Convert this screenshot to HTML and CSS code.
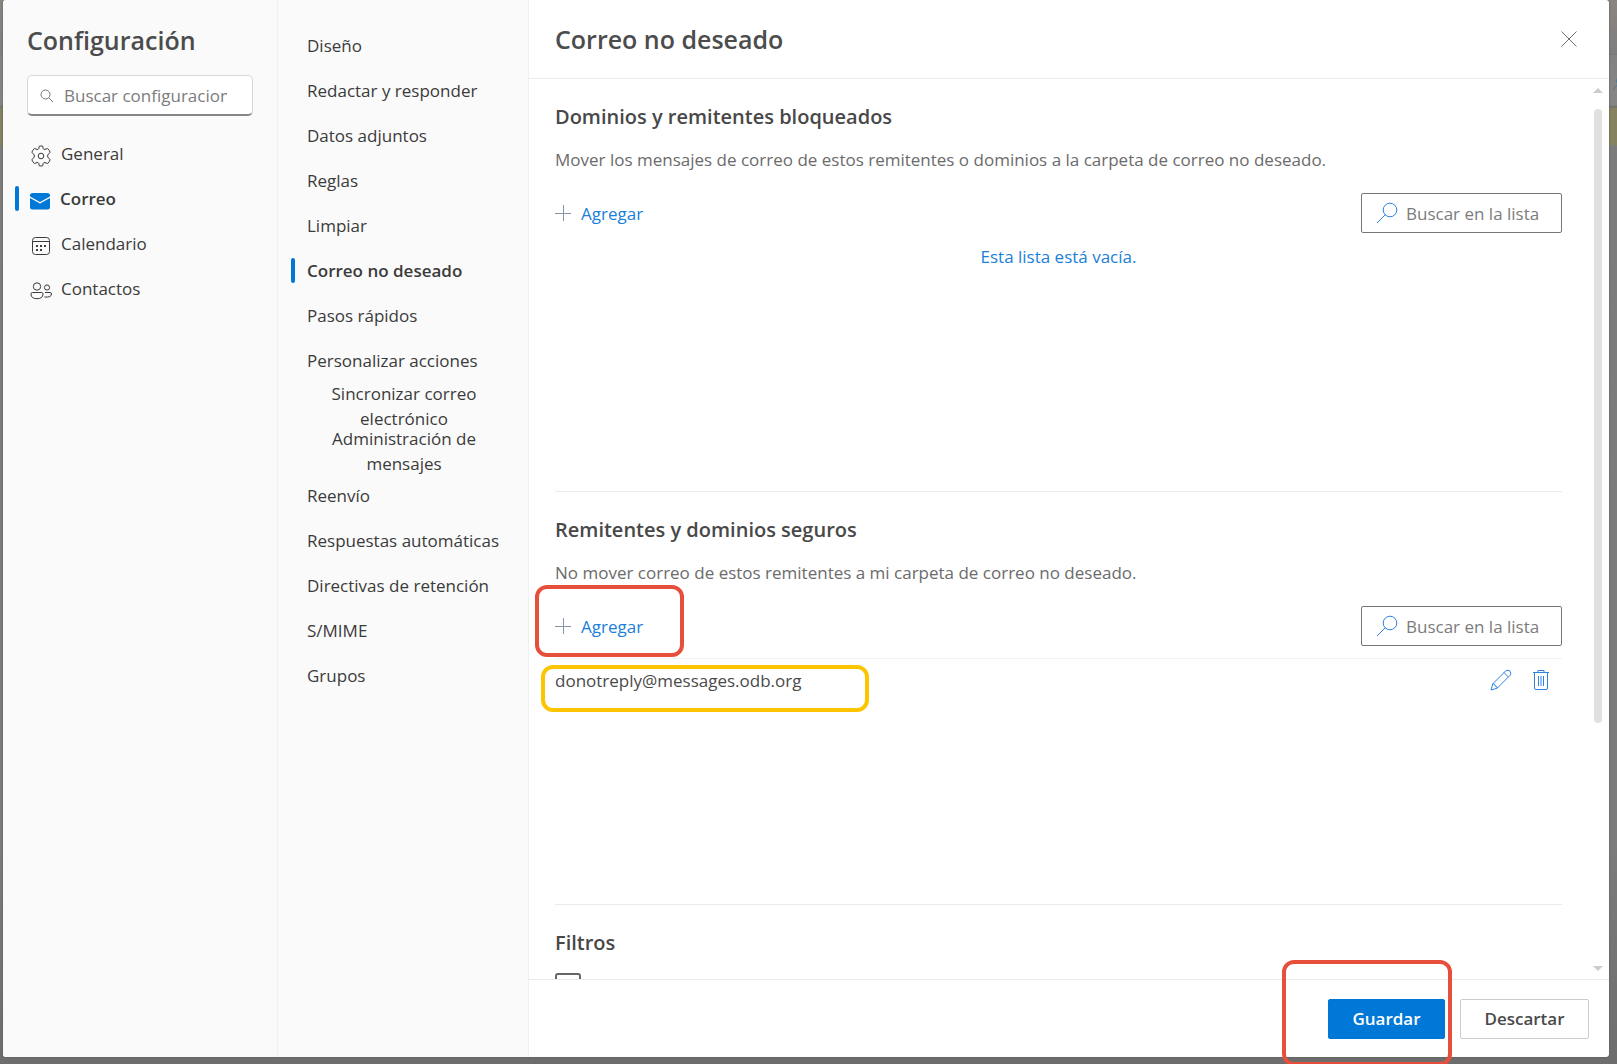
FILE: index.html
```html
<!DOCTYPE html>
<html lang="es">
<head>
<meta charset="utf-8">
<meta name="viewport" content="width=device-width, initial-scale=1">
<title>Configuración - Correo no deseado</title>
<link rel="stylesheet" href="styles.css">
</head>
<body>
<div class="backdrop">
  <svg class="backdrop-icon" viewBox="0 0 16 16" aria-hidden="true"><circle cx="8" cy="4" r="3.5"/><path d="M6 7L1 13"/></svg>
  <div class="dialog" role="dialog" aria-label="Configuración">
    <aside class="categories">
      <h1 class="title">Configuración</h1>
      <label class="settings-search">
        <svg class="icon-small" viewBox="0 0 14 14" aria-hidden="true"><circle cx="5.5" cy="5.5" r="4.5"/><path d="M8.8 8.8L13 13"/></svg>
        <input type="text" placeholder="Buscar configuraciones" aria-label="Buscar configuraciones">
      </label>
      <nav class="nav">
        <a class="nav-item" href="#general">
          <svg class="icon" viewBox="0 0 22 22" aria-hidden="true"><circle cx="11" cy="11" r="2.8"/><path d="M9.3 1.2Q11 .7 12.7 1.2L13.2 3.6Q13.6 4.8 15 4.4L17.6 3.5Q19.3 5 20.2 7.4L18.2 9.2Q16.9 11 18.2 12.8L20.2 14.6Q19.3 17 17.6 18.5L15 17.6Q13.6 17.2 13.2 18.4L12.7 20.8Q11 21.3 9.3 20.8L8.8 18.4Q8.4 17.2 7 17.6L4.4 18.5Q2.700 17 1.800 14.6L3.800 12.8Q5.100 11 3.800 9.200L1.800 7.400Q2.700 5 4.400 3.500L7 4.400Q8.400 4.800 8.800 3.600Z"/></svg>
          <span>General</span>
        </a>
        <a class="nav-item selected" href="#correo" aria-current="true">
          <svg class="icon" viewBox="0 0 22 22" aria-hidden="true"><path class="solid" d="M1 5.500Q1 3 3.500 3H18.500Q21 3 21 5.500V6.500L11 12L1 6.500ZM1 8L11 13.500L21 8V17Q21 19.500 18.500 19.500H3.500Q1 19.500 1 17Z"/></svg>
          <span>Correo</span>
        </a>
        <a class="nav-item" href="#calendario">
          <svg class="icon" viewBox="0 0 22 22" aria-hidden="true"><rect x="2.500" y="2.500" width="17" height="17" rx="3"/><path d="M2.500 6.500H19.500"/><path class="solid" d="M10 10h2v2h-2zM14 10h2v2h-2zM6 10h2v2H6zM6 14h2v2H6zM10 14h2v2h-2z"/></svg>
          <span>Calendario</span>
        </a>
        <a class="nav-item" href="#contactos">
          <svg class="icon" viewBox="0 0 22 22" aria-hidden="true"><circle cx="7" cy="6.500" r="3.700"/><circle cx="17" cy="7.500" r="2.600"/><path d="M2.500 12.500H11.500Q13 12.500 13 14Q13 18.700 7 18.700Q1 18.700 1 14Q1 12.500 2.500 12.500ZM15 12.500H20Q21.500 12.500 21.500 14Q21.500 17.600 14.500 17"/></svg>
          <span>Contactos</span>
        </a>
      </nav>
    </aside>

    <nav class="pages" aria-label="Correo">
      <a class="page" href="#diseno"><span>Diseño</span></a>
      <a class="page" href="#redactar"><span>Redactar y responder</span></a>
      <a class="page" href="#adjuntos"><span>Datos adjuntos</span></a>
      <a class="page" href="#reglas"><span>Reglas</span></a>
      <a class="page" href="#limpiar"><span>Limpiar</span></a>
      <a class="page selected" href="#nodeseado" aria-current="page"><span>Correo no deseado</span></a>
      <a class="page" href="#pasos"><span>Pasos rápidos</span></a>
      <a class="page" href="#acciones"><span>Personalizar acciones</span></a>
      <a class="page wrapped" href="#sincronizar"><span>Sincronizar correo electrónico</span></a>
      <a class="page wrapped" href="#mensajes"><span>Administración de mensajes</span></a>
      <a class="page" href="#reenvio"><span>Reenvío</span></a>
      <a class="page" href="#respuestas"><span>Respuestas automáticas</span></a>
      <a class="page" href="#directivas"><span>Directivas de retención</span></a>
      <a class="page" href="#smime"><span>S/MIME</span></a>
      <a class="page" href="#grupos"><span>Grupos</span></a>
    </nav>

    <main class="panel">
      <header class="panel-header">
        <h2 class="title">Correo no deseado</h2>
        <button class="close" type="button" aria-label="Cerrar"><svg viewBox="0 0 16 16" aria-hidden="true"><path d="M.5 .5L15.500 15.500M15.500 .5L.5 15.500"/></svg></button>
      </header>

      <div class="panel-body">
        <div class="content">
          <section class="section">
            <h3 class="heading">Dominios y remitentes bloqueados</h3>
            <p class="description">Mover los mensajes de correo de estos remitentes o dominios a la carpeta de correo no deseado.</p>
            <div class="toolbar">
              <button class="add" type="button"><svg viewBox="0 0 16 16" aria-hidden="true"><path d="M0 8.500H16M8.500 0V16"/></svg>Agregar</button>
              <label class="list-search">
                <svg viewBox="0 0 22 22" aria-hidden="true"><circle cx="14" cy="8" r="6.800"/><path d="M9.200 12.800L1 21"/></svg>
                <input type="text" placeholder="Buscar en la lista" aria-label="Buscar en dominios y remitentes bloqueados">
              </label>
            </div>
            <p class="empty">Esta lista está vacía.</p>
          </section>

          <section class="section">
            <h3 class="heading">Remitentes y dominios seguros</h3>
            <p class="description">No mover correo de estos remitentes a mi carpeta de correo no deseado.</p>
            <div class="toolbar">
              <button class="add" type="button"><svg viewBox="0 0 16 16" aria-hidden="true"><path d="M0 8.500H16M8.500 0V16"/></svg>Agregar</button>
              <label class="list-search">
                <svg viewBox="0 0 22 22" aria-hidden="true"><circle cx="14" cy="8" r="6.800"/><path d="M9.200 12.800L1 21"/></svg>
                <input type="text" placeholder="Buscar en la lista" aria-label="Buscar en remitentes y dominios seguros">
              </label>
              <div class="mark mark-add"></div>
            </div>
            <div class="sender">
              <span class="address">donotreply@messages.odb.org</span>
              <button class="action" type="button" aria-label="Editar"><svg viewBox="0 0 22 22" aria-hidden="true"><path d="M1 21L2.800 14.800L15.800 1.800Q18 .3 20 2.200Q21.600 4.200 20.200 6.200L7.200 19.200ZM2.800 14.800Q5.200 14.800 5.200 17Q7.200 17 7.200 19.200M14 3.600L18.400 8"/></svg></button>
              <button class="action" type="button" aria-label="Eliminar"><svg viewBox="0 0 22 22" aria-hidden="true"><path d="M3 3.500H19M8 3.500V1.500H14V3.500M4.500 3.500V19Q4.500 20.500 6 20.500H16Q17.500 20.500 17.500 19V3.500M8.500 7V17M11 7V17M13.500 7V17"/></svg></button>
              <div class="mark mark-sender"></div>
            </div>
          </section>

          <section class="section filters">
            <h3 class="heading">Filtros</h3>
            <input class="checkbox" type="checkbox" aria-label="Filtro de correo">
          </section>
        </div>
        <div class="scrollbar" aria-hidden="true">
          <span class="arrow-up"></span>
          <span class="track"><span class="thumb"></span></span>
          <span class="arrow-down"></span>
        </div>
      </div>

      <footer class="panel-footer">
        <div class="save-group">
          <button class="button primary" type="button">Guardar</button>
          <div class="mark mark-save"></div>
        </div>
        <button class="button" type="button">Descartar</button>
      </footer>
    </main>
  </div>
</div>
</body>
</html>
```

FILE: styles.css
```css
* {
  box-sizing: border-box;
}

body {
  margin: 0;
  font-family: "Open Sans", "Noto Sans", sans-serif;
  font-size: 17px;
  line-height: 25px;
  color: #3b3b3b;
}

h1, h2, h3, p {
  margin: 0;
}

a {
  color: inherit;
  text-decoration: none;
}

button, input {
  font: inherit;
  color: inherit;
}

button {
  padding: 0;
  border: 0;
  background: none;
}

svg {
  flex: none;
  fill: none;
  stroke: currentColor;
}

.backdrop {
  position: relative;
  display: flex;
  height: 100vh;
  overflow: hidden;
  padding: 0 8px 7px 3px;
  background: linear-gradient(#8a8581 0, #7e7e7e 54px, #707070 54px, #828282 55px, #858585 105px, #6c6c6c 107px, #85825f 108px, #85825f 145px, #7c7c7c 146px, #7b7b7b 80%, #6d6d6d 100%);
}

.backdrop-icon {
  position: absolute;
  top: 77px;
  right: -11px;
  width: 16px;
  height: 16px;
  stroke: #4b7895;
}

.dialog {
  position: relative;
  display: flex;
  flex: 1;
  min-width: 0;
  border-radius: 3px;
  background: #fff;
  box-shadow: 0 0 2px #555;
}

.title {
  font-size: 25px;
  font-weight: 600;
  line-height: 34px;
  color: #4c4c4c;
}

.categories {
  flex: none;
  width: 275px;
  padding: 23px 24px 0;
  border-right: 1px solid #f0f0f0;
  border-radius: 3px 0 0 3px;
  background: #fafafa;
}

.settings-search {
  display: flex;
  align-items: center;
  gap: 10px;
  height: 41px;
  margin-top: 18px;
  padding: 1px 25px 0 12px;
  border: 1px solid #d8d8d8;
  border-bottom: 2px solid #858585;
  border-radius: 5px;
  background: #fff;
}

.icon-small {
  width: 14px;
  height: 14px;
  color: #777;
}

input[type="text"] {
  flex: 1;
  width: 0;
  padding: 0;
  border: 0;
  outline: 0;
  background: none;
}

input::placeholder {
  color: #7c7c7c;
  opacity: 1;
}

.nav {
  margin-top: 15px;
}

.nav-item,
.page {
  position: relative;
  display: flex;
  align-items: center;
  height: 45px;
}

.nav-item {
  gap: 9px;
  padding-left: 3px;
}

.icon {
  width: 22px;
  height: 22px;
  margin-top: 4px;
}

.solid {
  fill: currentColor;
  stroke: none;
}

.selected {
  font-weight: 600;
}

.selected .icon {
  color: #0078d7;
}

.selected::before {
  content: "";
  position: absolute;
  top: 10px;
  left: -12px;
  width: 4px;
  height: 25px;
  border-radius: 2px;
  background: #0078d7;
}

.nav-item.selected {
  padding-left: 2px;
}

.pages {
  flex: none;
  width: 251px;
  padding: 23px 24px 0 29px;
  border-right: 1px solid #f0f0f0;
  background: #fafafa;
  white-space: nowrap;
}

.page.selected::before {
  left: -16px;
}

.wrapped {
  padding: 0 15px 0 12px;
  text-align: center;
  white-space: normal;
}

.wrapped span {
  flex: 1;
}

.panel {
  display: flex;
  flex: 1;
  flex-direction: column;
  min-width: 0;
}

.panel-header {
  display: flex;
  flex: none;
  align-items: center;
  justify-content: space-between;
  height: 79px;
  padding: 0 32px 0 26px;
  border-bottom: 1px solid #ebebeb;
}

.close {
  display: grid;
  color: #707070;
}

.close svg,
.add svg {
  width: 16px;
  height: 16px;
}

.panel-body {
  display: flex;
  flex: 1;
  min-height: 0;
}

.content {
  flex: 1;
  min-width: 0;
  overflow: hidden;
  padding: 0 28px 0 26px;
}

.section {
  height: 413px;
  padding-top: 24px;
  border-bottom: 1px solid #ebebeb;
}

.filters {
  border-bottom: 0;
}

.heading {
  font-size: 20px;
  font-weight: 600;
  line-height: 28px;
  color: #484848;
}

.description {
  margin-top: 16px;
  color: #6b6b6b;
}

.toolbar {
  position: relative;
  display: flex;
  align-items: center;
  justify-content: space-between;
  margin-top: 21px;
}

.add {
  display: flex;
  align-items: center;
  gap: 10px;
  color: #1a80da;
}

.add svg {
  color: #8795a8;
}

.list-search {
  display: flex;
  align-items: center;
  gap: 8px;
  width: 201px;
  height: 40px;
  padding: 0 15px 0 14px;
  border: 1px solid #777;
  border-radius: 2px;
}

.list-search svg {
  width: 22px;
  height: 22px;
  color: #2f80df;
}

.empty {
  margin-top: 11px;
  text-align: center;
  color: #1a80da;
}

.sender {
  position: relative;
  display: flex;
  align-items: center;
  gap: 18px;
  height: 43px;
  margin-top: 12px;
  padding-right: 10px;
  border-top: 1px solid #f2f2f2;
}

.address {
  flex: 1;
  color: #4a4a4a;
}

.action {
  display: grid;
  color: #2f80df;
}

.action svg {
  width: 22px;
  height: 22px;
}

.checkbox {
  appearance: none;
  width: 26px;
  height: 26px;
  margin: 16px 0 0;
  border: 2px solid #666;
  border-radius: 3px;
}

.scrollbar {
  display: flex;
  flex: none;
  flex-direction: column;
  align-items: center;
  width: 15px;
  margin-right: 4px;
  padding: 9px 0 8px;
}

.arrow-up,
.arrow-down {
  border: 5px solid transparent;
}

.arrow-up {
  border-top: 0;
  border-bottom-color: #c8cdd0;
}

.arrow-down {
  border-bottom: 0;
  border-top-color: #c8cdd0;
}

.track {
  flex: 1;
  width: 8px;
  padding: 16px 0;
}

.thumb {
  display: block;
  height: 73%;
  border-radius: 4px;
  background: #e0e0e0;
}

.panel-footer {
  display: flex;
  flex: none;
  align-items: center;
  justify-content: flex-end;
  gap: 15px;
  height: 78px;
  padding-right: 20px;
  border-top: 1px solid #ebebeb;
}

.save-group {
  position: relative;
}

.button {
  display: block;
  width: 129px;
  height: 40px;
  border: 1px solid #ccc;
  border-radius: 2px;
  background: #fff;
  font-weight: 600;
  color: #4a4a4a;
}

.primary {
  width: 117px;
  border-color: #0078d7;
  background: #0078d7;
  color: #fff;
}

.mark {
  position: absolute;
  border: 4px solid #e74f3d;
  border-radius: 12px;
  pointer-events: none;
}

.mark-add {
  top: -21px;
  left: -20px;
  width: 149px;
  height: 72px;
}

.mark-sender {
  top: 6px;
  left: -14px;
  width: 328px;
  height: 47px;
  border-color: #fdc500;
}

.mark-save {
  top: -39px;
  left: -46px;
  width: 170px;
  height: 106px;
}
```
